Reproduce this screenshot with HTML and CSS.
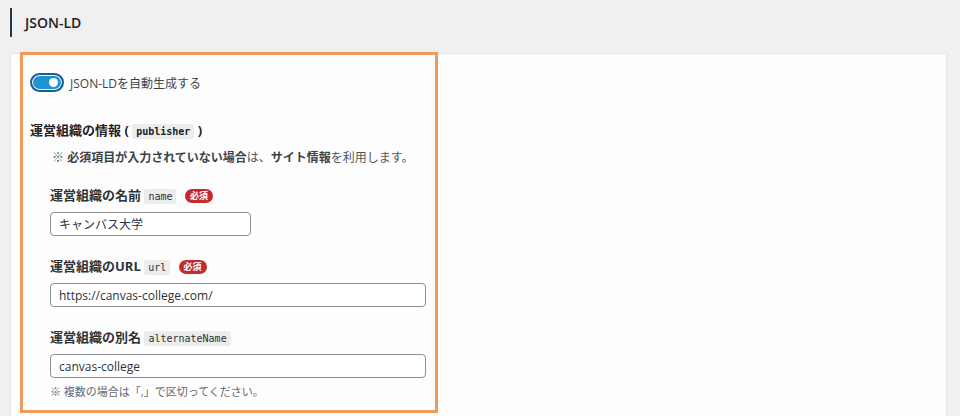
FILE: index.html
```html
<!DOCTYPE html>
<html lang="ja">
<head>
    <meta charset="UTF-8">
    <meta name="viewport" content="width=device-width, initial-scale=1.0">
    <title>JSON-LD</title>
    <link rel="stylesheet" href="styles.css">
</head>
<body>
    <h2 class="page-title">JSON-LD</h2>

    <div class="panel">
        <section class="highlight">
            <label class="switch-row">
                <span class="switch"><span class="knob"></span></span>
                <span>JSON-LDを自動生成する</span>
            </label>

            <h3 class="group-title">運営組織の情報 ( <code>publisher</code> )</h3>
            <p class="note">※ <b>必須項目が入力されていない場合</b>は、<b>サイト情報</b>を利用します。</p>

            <div class="fields">
                <div class="field">
                    <div class="field-label">運営組織の名前 <code>name</code> <span class="required">必須</span></div>
                    <input class="text-input short" type="text" value="キャンバス大学">
                </div>
                <div class="field">
                    <div class="field-label">運営組織のURL <code>url</code> <span class="required">必須</span></div>
                    <input class="text-input" type="text" value="https://canvas-college.com/">
                </div>
                <div class="field">
                    <div class="field-label">運営組織の別名 <code>alternateName</code></div>
                    <input class="text-input" type="text" value="canvas-college">
                    <p class="help">※ 複数の場合は「,」で区切ってください。</p>
                </div>
            </div>
        </section>
    </div>
</body>
</html>
```

FILE: styles.css
```css
body {
    margin: 0;
    padding: 0;
    background-color: #f0f0f1;
    color: #1d2327;
    font-family: "Open Sans", "Noto Sans CJK JP", sans-serif;
    height: 416px;
    overflow: hidden;
}
.page-title {
    margin: 8px 0 0 10px;
    padding-left: 13px;
    border-left: 2px solid #1d3b4f;
    height: 29px;
    line-height: 29px;
    font-size: 14px;
    font-weight: 600;
}
.panel {
    margin: 16px 13px 0 10px;
    padding-left: 9px;
    height: 362px;
    background-color: #fdfdfd;
    border: 1px solid #e6e6e6;
    border-bottom: 0;
}
.highlight {
    box-sizing: border-box;
    width: 418px;
    height: 361px;
    margin-top: -2px;
    padding: 18px 0 0 7px;
    border: 3px solid #ef9a5b;
}
.switch-row {
    display: flex;
    align-items: center;
    gap: 6px;
    font-size: 12px;
    color: #3c434a;
}
.switch {
    position: relative;
    box-sizing: border-box;
    width: 34px;
    height: 19px;
    border-radius: 10px;
    background-color: #1f93d0;
    border: 2px solid #1b5f86;
    box-shadow: inset 0 0 0 1px #fff;
}
.knob {
    position: absolute;
    top: 3px;
    right: 4px;
    width: 9px;
    height: 9px;
    border-radius: 50%;
    background-color: #fff;
}
.group-title {
    margin: 28px 0 0 0;
    font-size: 13px;
    line-height: 20px;
    font-weight: bold;
}
code {
    font-family: "DejaVu Sans Mono", monospace;
    font-size: 10px;
    font-weight: normal;
    background-color: #ececec;
    padding: 2px 4px;
    border-radius: 2px;
}
.group-title code {
    font-weight: bold;
}
.note {
    margin: 6px 0 0 22px;
    font-size: 12px;
    line-height: 20px;
    color: #50575e;
}
.note b {
    color: #3c434a;
}
.fields {
    padding-left: 20px;
}
.field {
    margin-top: 17px;
}
.field + .field {
    margin-top: 20px;
}
.field-label {
    font-size: 13px;
    line-height: 20px;
    font-weight: bold;
    color: #2c3338;
}
.required {
    display: inline-block;
    margin-left: 5px;
    padding: 0 5px;
    height: 14px;
    line-height: 14px;
    border-radius: 7px;
    background-color: #c62b2b;
    color: #fff;
    font-size: 9px;
    vertical-align: 1px;
}
.text-input {
    display: block;
    box-sizing: border-box;
    margin-top: 5px;
    width: 376px;
    height: 24px;
    padding: 0 8px;
    border: 1px solid #8c8f94;
    border-radius: 4px;
    background-color: #fff;
    font-family: "Open Sans", "Noto Sans CJK JP", sans-serif;
    font-size: 12px;
    color: #2c3338;
}
.text-input.short {
    width: 201px;
}
.help {
    margin: 4px 0 0 0;
    font-size: 11px;
    line-height: 20px;
    color: #646970;
}
```
